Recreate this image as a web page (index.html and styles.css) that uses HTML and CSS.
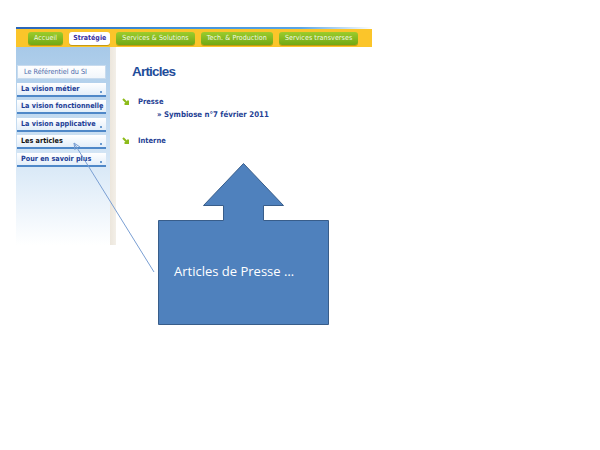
FILE: index.html
```html
<!DOCTYPE html>
<html lang="fr">
<head>
<meta charset="utf-8">
<title>Articles</title>
<link rel="stylesheet" href="styles.css">
</head>
<body>
<div class="slide">
  <div class="site">
    <div class="topline"></div>
    <nav class="nav">
      <span class="tab">Accueil</span>
      <span class="tab active">Stratégie</span>
      <span class="tab">Services &amp; Solutions</span>
      <span class="tab">Tech. &amp; Production</span>
      <span class="tab">Services transverses</span>
    </nav>
    <div class="main">
      <aside class="sidebar">
        <div class="menu">
          <div class="item first">Le Référentiel du SI</div>
          <div class="item">La vision métier</div>
          <div class="item">La vision fonctionnelle</div>
          <div class="item">La vision applicative</div>
          <div class="item current">Les articles</div>
          <div class="item">Pour en savoir plus</div>
        </div>
      </aside>
      <div class="strip"></div>
      <section class="content">
        <h1 class="title">Articles</h1>
        <div class="cat">
          <svg class="bullet" viewBox="0 0 8 8" width="8" height="8"><path d="M1 1 L6 6 M6 2.5 V6 H2.5" stroke="#8dbb1a" stroke-width="2" fill="none"/></svg>
          <span>Presse</span>
        </div>
        <div class="sub">» Symbiose n°7 février 2011</div>
        <div class="cat cat2">
          <svg class="bullet" viewBox="0 0 8 8" width="8" height="8"><path d="M1 1 L6 6 M6 2.5 V6 H2.5" stroke="#8dbb1a" stroke-width="2" fill="none"/></svg>
          <span>Interne</span>
        </div>
      </section>
    </div>
  </div>

  <svg class="overlay" width="600" height="450" viewBox="0 0 600 450">
    <line x1="154" y1="272" x2="74" y2="143" stroke="#7a9fd3" stroke-width="1"/>
    <path d="M74 143 L75 150 M74 143 L80 147" stroke="#7a9fd3" stroke-width="1" fill="none"/>
    <path d="M158.5 220.5 H223.5 V205.5 H203.5 L243.5 163.5 L283.5 205.5 H263.5 V220.5 H328.5 V324.5 H158.5 Z" fill="#4f81bd" stroke="#385d8a" stroke-width="1"/>
  </svg>
  <div class="callout-text">Articles de Presse …</div>
</div>
</body>
</html>
```

FILE: styles.css
```css
html, body {
  margin: 0;
  padding: 0;
  background: #ffffff;
}
.slide {
  position: relative;
  width: 600px;
  height: 450px;
  overflow: hidden;
}
.site {
  padding-top: 27px;
  margin-left: 16px;
  width: 356px;
}
.topline {
  height: 2px;
  background: linear-gradient(90deg, #2a64b8, #3d8ed8 40%, #5aa6e6 80%, #ffffff 100%);
}
.nav {
  height: 18px;
  background: #fbc52a;
  display: flex;
  align-items: center;
  padding-left: 12px;
  gap: 6px;
}
.tab {
  font-family: "DejaVu Sans Condensed", "DejaVu Sans", sans-serif;
  font-size: 7px;
  color: #f4f9e6;
  background: linear-gradient(#9ccc2c, #72a814);
  border-radius: 3px;
  height: 13px;
  line-height: 13px;
  padding: 0 6px;
  letter-spacing: 0.1px;
  box-shadow: 0 1px 0 #c89a10;
}
.tab.active {
  background: #ffffff;
  color: #3a2fa0;
  font-weight: bold;
  padding: 0 4px;
  letter-spacing: 0;
}
.main {
  display: flex;
  height: 198px;
}
.sidebar {
  width: 94px;
  background: linear-gradient(#a7c9e8 0%, #c2daf0 35%, #e2eef9 70%, #ffffff 100%);
}
.strip {
  width: 6px;
  background: linear-gradient(90deg, #ece6dc, #f3efe8);
}
.menu {
  padding: 18px 4px 0 1px;
  display: flex;
  flex-direction: column;
  gap: 3.5px;
}
.item {
  height: 12px;
  line-height: 12px;
  font-family: "DejaVu Sans Condensed", "DejaVu Sans", sans-serif;
  font-size: 7.2px;
  font-weight: bold;
  color: #1c3d96;
  background: linear-gradient(#ffffff, #e3eef9);
  border-bottom: 2px solid #4f88c8;
  padding-left: 4px;
  white-space: nowrap;
  overflow: hidden;
  position: relative;
}
.item::after {
  content: "";
  position: absolute;
  right: 4px;
  bottom: 2px;
  width: 2px;
  height: 2px;
  background: #6b9bd0;
}
.item.first {
  font-weight: normal;
  color: #4a68a8;
  background: linear-gradient(#ffffff, #f1f6fb);
  border: 1px solid #c8dbee;
  height: 12px;
  padding-left: 6px;
}
.item.first::after { display: none; }
.item.current {
  color: #111111;
}
.content {
  flex: 1;
  padding-left: 6px;
  font-family: "DejaVu Sans Condensed", "DejaVu Sans", sans-serif;
  color: #1f3f94;
}
.title {
  margin: 17px 0 0 10px;
  font-family: "Liberation Sans", sans-serif;
  font-size: 13.5px;
  font-weight: bold;
  letter-spacing: -0.8px;
  color: #1f4d9a;
  line-height: 16px;
}
.cat {
  display: flex;
  align-items: center;
  gap: 8px;
  margin-top: 17px;
  font-size: 7.5px;
  font-weight: bold;
}
.cat2 {
  margin-top: 17px;
}
.bullet {
  flex: none;
}
.sub {
  margin: 4px 0 0 35px;
  font-size: 7.8px;
  font-weight: bold;
}
.overlay {
  position: absolute;
  left: 0;
  top: 0;
  pointer-events: none;
}
.callout-text {
  position: absolute;
  left: 174px;
  top: 262px;
  font-family: "Open Sans", "Liberation Sans", sans-serif;
  font-size: 13px;
  color: #ffffff;
  white-space: nowrap;
}
```
